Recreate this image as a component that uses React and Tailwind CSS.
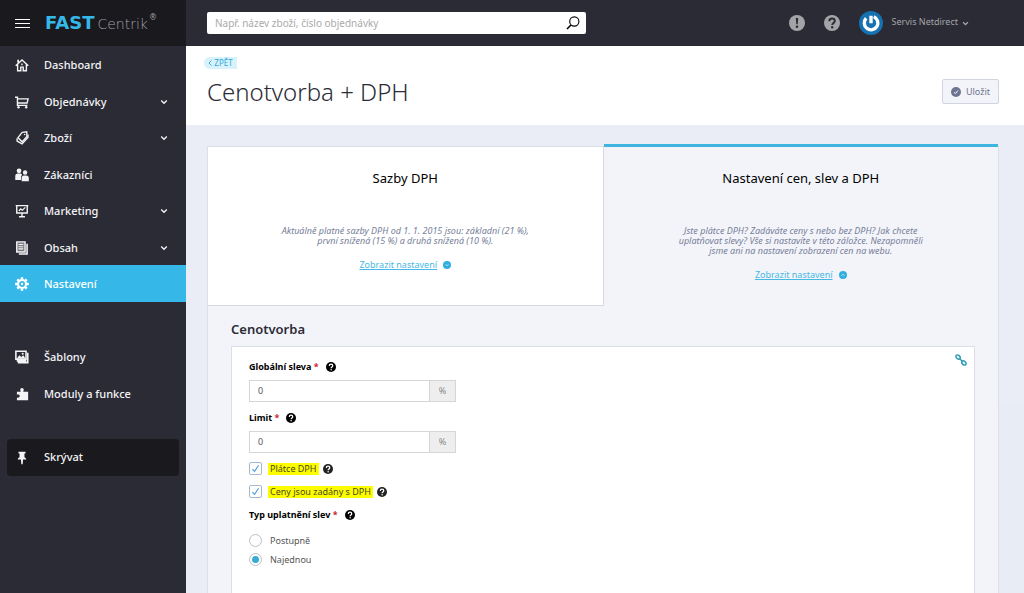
import React from "react";

function Icon({ children, className = "size-[14px]" }) {
  return (
    <svg
      viewBox="0 0 16 16"
      className={className}
      fill="none"
      stroke="currentColor"
      strokeWidth="1.6"
      aria-hidden="true"
    >
      {children}
    </svg>
  );
}

const icons = {
  home: (
    <Icon>
      <path d="M.8 8.800 8 2.200l7.200 6.600M3 7.500v7.100h3.600V10.400h2.800v4.200H13V7.500" />
      <path d="M3.600 2v3.400" strokeWidth="2" />
      <path d="M8 6.400v2" />
    </Icon>
  ),
  cart: (
    <Icon>
      <path d="M0 2.500h2.800v9.300h11.400M2.800 4.400h12.200l-1.200 4.800H2.800" />
      <circle cx="4" cy="14" r="1.400" fill="currentColor" stroke="none" />
      <circle cx="12.800" cy="14" r="1.400" fill="currentColor" stroke="none" />
    </Icon>
  ),
  tag: (
    <Icon>
      <path d="M8.200 1.600 13.400 1l.2 5.200-5.400 6.200-4.800-4.800z" />
      <path d="M2.400 8.400v3.200l5.600 3.200 6.800-7.400V4" />
      <circle cx="11" cy="4" r="0.900" fill="currentColor" stroke="none" />
    </Icon>
  ),
  people: (
    <Icon>
      <g fill="currentColor" stroke="none">
        <circle cx="4.600" cy="3.200" r="2.700" />
        <path d="M.3 13.600V9.200c0-2 1.400-2.900 3-2.900h2.600c1.400 0 2 .8 2.200 1.800-1 .8-1.200 1.800-1.200 3.200v2.300z" />
        <circle cx="11.500" cy="5.200" r="2.500" />
        <path d="M7.600 15.200v-3.800c0-1.800 1-2.900 2.600-2.900h2.600c1.800 0 3 1.100 3 2.900v3.800z" />
      </g>
    </Icon>
  ),
  board: (
    <Icon>
      <path d="M.8 1.800h14.400M2 2v8.200h12V2M8 10.200V14M4.600 14.600h6.800" />
      <path d="m4.400 8 2.200-2.400L8.400 7l3.400-3.200" strokeWidth="1.400" />
    </Icon>
  ),
  pages: (
    <Icon>
      <path d="M2 1h9.500v11.500H2z" fill="currentColor" fillOpacity="0.400" />
      <path d="M13.800 3v11.800H4.400" strokeWidth="1.800" />
      <path d="M4 4h5.400M4 6.600h5.400M4 9h5.400" strokeWidth="1.200" />
    </Icon>
  ),
  gear: (
    <Icon>
      <circle cx="8" cy="8" r="4.600" strokeWidth="2.400" />
      <circle cx="8" cy="8" r="1.300" fill="currentColor" stroke="none" />
      <path
        d="M8 .2v2.800M8 13v2.800M.2 8h2.800M13 8h2.800M2.600 2.600l1.800 1.800M11.600 11.600l1.800 1.800M2.600 13.400l1.800-1.800M11.600 4.400l1.800-1.800"
        strokeWidth="2.800"
      />
    </Icon>
  ),
  images: (
    <Icon>
      <path d="M1 1.400h11.600v9H1z" strokeWidth="1.800" />
      <path d="M2 9.800 5 6l2.200 2L9.400 6l2.600 3.800z" fill="currentColor" stroke="none" />
      <circle cx="8.800" cy="4.200" r="1.200" fill="currentColor" stroke="none" />
      <path d="M14.600 3v11.400H3.200M2 12.400h11" strokeWidth="1.800" />
    </Icon>
  ),
  puzzle: (
    <Icon>
      <path
        d="M2.200 5.400h4.200c.5-.6-.4-1-.4-2.200C6 2 6.900 1.200 8 1.200s2 .8 2 2c0 1.200-.9 1.600-.4 2.200h5.400V15H2.200v-3c1.400.5 3.200.2 3.200-1.600S3.600 8.400 2.200 8.900z"
        fill="currentColor"
        stroke="none"
      />
    </Icon>
  ),
  pin: (
    <Icon>
      <path
        d="M4 .8h8v2h-1.200V7c1.400.6 2 1.400 2 2.600H9.200L8.800 15H7.200l-.4-5.400H3.200C3.200 8.400 3.800 7.600 5.200 7V2.800H4z"
        fill="currentColor"
        stroke="none"
      />
    </Icon>
  ),
};

function Chevron({ className = "size-2" }) {
  return (
    <svg viewBox="0 0 8 8" className={className} fill="none" stroke="currentColor" strokeWidth="1.400" aria-hidden="true">
      <path d="m1.200 2.600 2.800 2.600 2.800-2.600" />
    </svg>
  );
}

function Help({ className = "size-[10px] text-black", mark = "#fff" }) {
  return (
    <svg viewBox="0 0 16 16" className={className} role="img" aria-label="Nápověda">
      <circle cx="8" cy="8" r="8" fill="currentColor" />
      <path d="M5.300 6.200c0-3.700 5.500-3.400 5.500-.3C10.800 7.900 8.200 8 8.200 10" fill="none" stroke={mark} strokeWidth="2" />
      <circle cx="8.200" cy="12.300" r="1.200" fill={mark} />
    </svg>
  );
}

function NavItem({ icon, label, more, active }) {
  return (
    <li className="flex flex-1">
      <a
        href="#"
        aria-current={active ? "page" : undefined}
        className={
          active
            ? "flex flex-1 items-center bg-[#35b8e8] pl-[15px] pr-[18px] pt-[2px] text-white"
            : "flex flex-1 items-center pl-[15px] pr-[18px] pt-[2px]"
        }
      >
        {icons[icon]}
        <span className="ml-[15px] flex-1">{label}</span>
        {more && <Chevron />}
      </a>
    </li>
  );
}

function Sidebar() {
  return (
    <aside className="w-[186px] shrink-0 bg-[#2b2b35] text-[11px] font-medium text-[#f4f4f6]">
      <div className="flex h-[46px] items-center bg-[#1a191e] pl-[15px]">
        <button type="button" aria-label="Menu" className="flex w-[15px] flex-col gap-[3px]">
          <span className="h-px bg-white" />
          <span className="h-px bg-white" />
          <span className="h-px bg-white" />
        </button>
        <a href="#" className="ml-[15px] flex items-start gap-px font-['DejaVu_Sans',sans-serif] leading-none">
          <span className="flex items-baseline gap-[3px]">
            <span className="text-[18px] font-bold text-[#35b8e8]">FAST</span>
            <span className="text-[14px] font-extralight text-[#a0a0a6]">Centrik</span>
          </span>
          <span className="text-[8px] font-normal text-[#a0a0a6]">®</span>
        </a>
      </div>
      <nav>
        <ul className="flex h-[365px] flex-col">
          <NavItem icon="home" label="Dashboard" />
          <NavItem icon="cart" label="Objednávky" more />
          <NavItem icon="tag" label="Zboží" more />
          <NavItem icon="people" label="Zákazníci" />
          <NavItem icon="board" label="Marketing" more />
          <NavItem icon="pages" label="Obsah" more />
          <NavItem icon="gear" label="Nastavení" active />
          <li className="flex-1" aria-hidden="true" />
          <NavItem icon="images" label="Šablony" />
          <NavItem icon="puzzle" label="Moduly a funkce" />
        </ul>
        <button
          type="button"
          className="mx-[7px] mt-[28px] flex h-[37px] w-[172px] items-center rounded-sm bg-[#1a191e] pl-2 text-left"
        >
          {icons.pin}
          <span className="ml-[15px]">Skrývat</span>
        </button>
      </nav>
    </aside>
  );
}

function TopBar() {
  return (
    <header className="flex h-[46px] shrink-0 items-center bg-[#2b2b35] pl-[21px] pr-[55px]">
      <form className="flex h-[22px] w-[379px] items-center rounded-xs bg-white pl-2 pr-[6px]">
        <input
          type="search"
          aria-label="Hledat"
          placeholder="Např. název zboží, číslo objednávky"
          className="min-w-0 flex-1 bg-transparent text-[10px] outline-none placeholder:text-[#aaaaaa]"
        />
        <button type="button" aria-label="Hledat" className="text-black">
          <svg viewBox="0 0 14 14" className="size-[14px]" fill="none" stroke="currentColor">
            <circle cx="8.300" cy="5.500" r="4.600" strokeWidth="1.100" />
            <path d="M5 8.900 1 13" strokeWidth="1.500" />
          </svg>
        </button>
      </form>
      <div className="ml-auto flex items-center text-[#a4a4a8]">
        <button type="button" aria-label="Upozornění">
          <svg viewBox="0 0 16 16" className="size-4">
            <circle cx="8" cy="8" r="8" fill="currentColor" />
            <path d="M6.800 3h2.400l-.5 6.200H7.300z" fill="#2b2b35" />
            <circle cx="8" cy="11.800" r="1.300" fill="#2b2b35" />
          </svg>
        </button>
        <button type="button" aria-label="Nápověda" className="ml-[19px]">
          <Help className="size-4" mark="#2b2b35" />
        </button>
        <button type="button" className="ml-[19px] flex items-center text-[9px]">
          <svg viewBox="0 0 24 24" className="size-6" aria-hidden="true">
            <circle cx="12" cy="12" r="12" fill="#1571b0" />
            <path
              d="M14.800 5.800a6.800 6.800 0 1 1-7.600 1.500M12 4.800v7.400"
              fill="none"
              stroke="#fff"
              strokeWidth="3.400"
            />
          </svg>
          <span className="ml-[9px] mr-1 pb-[2px]">Servis Netdirect</span>
          <Chevron className="size-[7px]" />
        </button>
      </div>
    </header>
  );
}

function TabCard({ title, active, children }) {
  return (
    <button
      type="button"
      role="tab"
      aria-selected={active}
      className={
        active
          ? "-mt-[3px] flex flex-1 flex-col items-center border-t-[3px] border-[#3fb4de] bg-[#f3f4f9] pt-[22px]"
          : "flex flex-1 flex-col items-center border-b border-r border-[#d5d9e4] bg-white pt-[22px]"
      }
    >
      <span className="text-[13px] leading-[18px] text-black">{title}</span>
      <span className="mt-[39px] w-[260px] text-[9px] italic leading-[10px] text-[#77809a]">{children}</span>
      <span className="mt-[10px] flex items-center gap-[6px] text-[9px] leading-[18px] text-[#45b9e4]">
        <span className="underline">Zobrazit nastavení</span>
        <svg viewBox="0 0 8 8" className="size-2" aria-hidden="true">
          <circle cx="4" cy="4" r="4" fill="#31aee0" />
          <path
            d={active ? "m2.400 4.600 1.600-1.200 1.600 1.200" : "m2.400 3.500 1.600 1.200 1.600-1.200"}
            fill="none"
            stroke="#fff"
            strokeWidth="0.600"
          />
        </svg>
      </span>
    </button>
  );
}

function Label({ id, children }) {
  return (
    <div className="flex h-4 items-center gap-[7px] text-[9px] font-bold text-black">
      <label id={id + "-label"} htmlFor={id}>
        {children} <span className="text-[#d0202c]">*</span>
      </label>
      <Help />
    </div>
  );
}

function PercentField({ id, label }) {
  return (
    <div>
      <Label id={id}>{label}</Label>
      <div className="mt-[5px] flex h-[22px] w-[207px] border border-[#d6d6d6] text-[9px] text-[#555555]">
        <input id={id} type="text" defaultValue="0" className="min-w-0 flex-1 bg-white px-2 outline-none" />
        <span className="grid w-[26px] place-items-center border-l border-[#d6d6d6] bg-[#eeeeee] text-[#888888]">%</span>
      </div>
    </div>
  );
}

function Check({ id, label }) {
  return (
    <div className="flex h-[23px] items-center">
      <span className="grid place-items-center">
        <input
          id={id}
          type="checkbox"
          defaultChecked
          className="peer col-start-1 row-start-1 size-[13px] appearance-none rounded-xs border border-[#a9b8c9] bg-white"
        />
        <svg
          viewBox="0 0 10 10"
          className="pointer-events-none col-start-1 row-start-1 hidden size-[9px] peer-checked:block"
          fill="none"
          stroke="#4a9bd6"
          strokeWidth="1.200"
        >
          <path d="m1.600 5.600 2.400 2.600L8.400 1.400" />
        </svg>
      </span>
      <label htmlFor={id} className="ml-[6px] bg-[#fdfd00] px-[2px] text-[9px] leading-[12px] text-[#4a4a20]">
        {label}
      </label>
      <Help className="ml-1 size-[10px] text-[#222222]" />
    </div>
  );
}

function Radio({ id, label, checked }) {
  return (
    <div className="flex h-[19px] items-center">
      <span className="grid place-items-center">
        <input
          id={id}
          type="radio"
          name="discount"
          defaultChecked={checked}
          className="peer col-start-1 row-start-1 size-[13px] appearance-none rounded-full border border-[#bcbfca] bg-white"
        />
        <span className="pointer-events-none col-start-1 row-start-1 hidden size-[7px] rounded-full bg-[#38acd0] peer-checked:block" />
      </span>
      <label htmlFor={id} className="ml-2 text-[9px] text-[#555555]">
        {label}
      </label>
    </div>
  );
}

export default function App() {
  return (
    <div className="flex h-screen overflow-hidden bg-white font-['Noto_Sans',sans-serif]">
      <Sidebar />
      <div className="flex min-w-0 flex-1 flex-col">
        <TopBar />
        <div className="flex h-[79px] shrink-0 items-start justify-between pl-[21px] pr-[25px]">
          <div className="-ml-[3px] pt-[11px]">
            <a
              href="#"
              className="flex h-3 w-[33px] items-center justify-center gap-[2px] rounded-l-full rounded-r-sm bg-[#d8f2fc] text-[8px] text-[#35a8d8]"
            >
              <svg viewBox="0 0 4 6" className="h-[6px] w-1" fill="none" stroke="currentColor">
                <path d="M3.300.6 1 3l2.300 2.400" />
              </svg>
              ZPĚT
            </a>
            <h1 className="ml-[3px] mt-[5px] text-[24px] font-light leading-[36px] text-[#2b2b35]">Cenotvorba + DPH</h1>
          </div>
          <button
            type="button"
            className="mt-[33px] flex h-[25px] w-[57px] items-center justify-center gap-[5px] rounded-xs border border-[#d0d4df] bg-[#f3f4f9] text-[9px] text-[#6e7591]"
          >
            <svg viewBox="0 0 10 10" className="size-[10px]">
              <circle cx="5" cy="5" r="5" fill="currentColor" />
              <path d="m3 5.300 1.400 1.300L7 3.500" fill="none" stroke="#fff" />
            </svg>
            Uložit
          </button>
        </div>
        <main className="flex flex-1 flex-col bg-[#eaedf6] bg-[linear-gradient(#eaedf6_277px,#e7ecf5_277px)] bg-[length:25px_100%] bg-right bg-no-repeat pl-[21px] pr-[25px] pt-[21px]">
          <div className="flex flex-1 flex-col border-x border-[#dcdfe9] bg-[#f3f4f9]">
            <div role="tablist" className="flex h-[160px] border-t border-[#dcdfe9]">
              <TabCard title="Sazby DPH" active={false}>
                Aktuálně platné sazby DPH od 1. 1. 2015 jsou: základní (21 %), první snížená (15 %) a druhá snížená (10 %).
              </TabCard>
              <TabCard title="Nastavení cen, slev a DPH" active>
                Jste plátce DPH? Zadáváte ceny s nebo bez DPH? Jak chcete uplatňovat slevy? Vše si nastavíte v této záložce.
                Nezapomněli jsme ani na nastavení zobrazení cen na webu.
              </TabCard>
            </div>
            <section className="flex flex-1 flex-col px-[23px] pt-[14px]">
              <h2 className="text-[13px] font-semibold leading-[18px] text-[#2b2b35]">Cenotvorba</h2>
              <form className="mt-2 flex flex-1 justify-between border border-b-0 border-[#dcdfe6] bg-white pl-[17px] pr-[7px]">
                <div className="pt-3">
                  <div className="flex flex-col gap-2">
                    <PercentField id="global" label="Globální sleva" />
                    <PercentField id="limit" label="Limit" />
                  </div>
                  <div className="mt-1">
                    <Check id="payer" label="Plátce DPH" />
                    <Check id="with-vat" label="Ceny jsou zadány s DPH" />
                  </div>
                  <div className="mt-1" role="radiogroup" aria-labelledby="type-label">
                    <Label id="type">Typ uplatnění slev</Label>
                    <div className="mt-2">
                      <Radio id="gradual" label="Postupně" />
                      <Radio id="once" label="Najednou" checked />
                    </div>
                  </div>
                </div>
                <a href="#" aria-label="Odkaz" className="mt-[7px] h-3 text-[#2e9cb4]">
                  <svg viewBox="0 0 12 12" className="size-3" fill="none" stroke="currentColor" strokeWidth="1.500">
                    <rect x="-2.400" y="-1.700" width="4.800" height="3.400" rx="1.700" transform="translate(3.100 3.100) rotate(45)" />
                    <rect x="-2.400" y="-1.700" width="4.800" height="3.400" rx="1.700" transform="translate(8.900 8.900) rotate(45)" />
                    <path d="m4.300 4.300 3.400 3.400" />
                  </svg>
                </a>
              </form>
            </section>
          </div>
        </main>
      </div>
    </div>
  );
}
